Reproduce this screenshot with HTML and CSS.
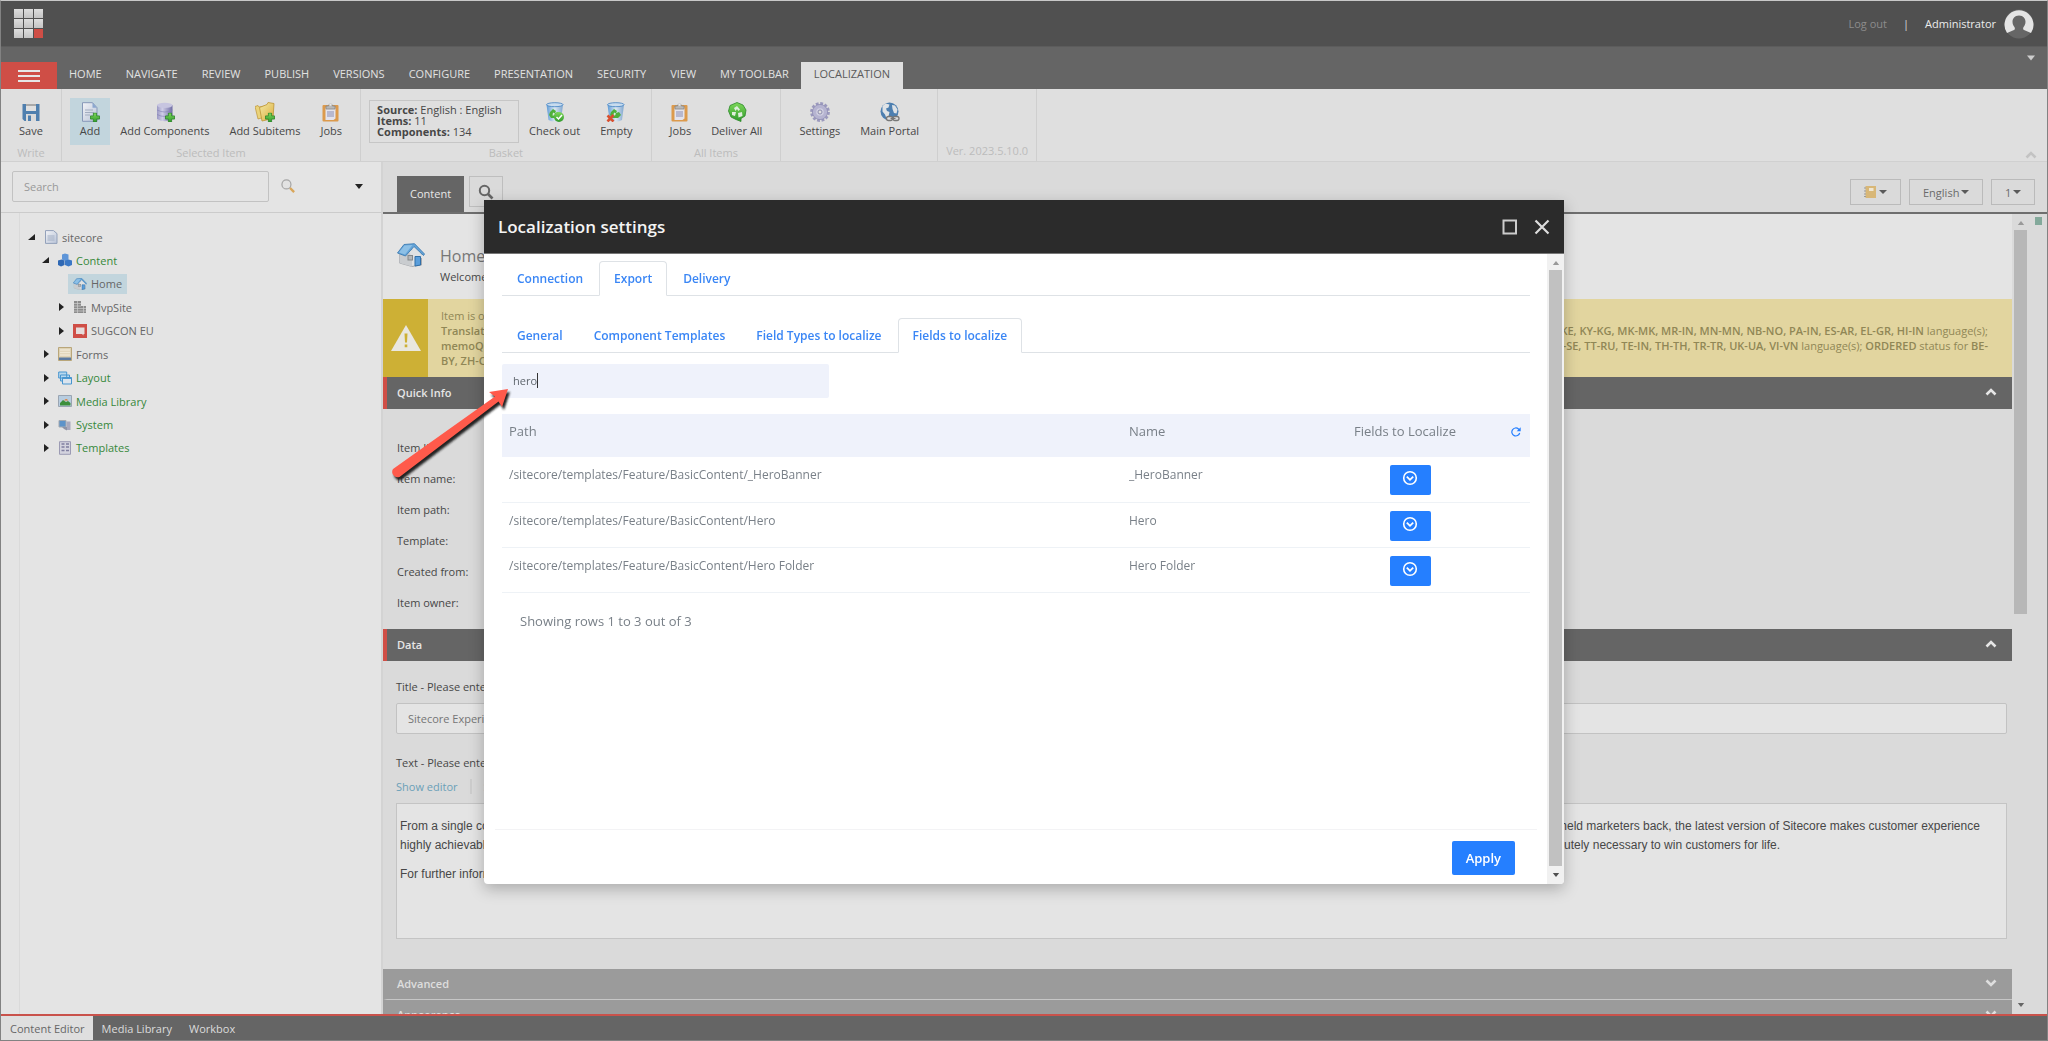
FILE: index.html
```html
<!DOCTYPE html>
<html lang="en">
<head>
  <meta charset="UTF-8">
  <meta name="viewport" content="width=device-width, initial-scale=1.0">
  <title>Content Editor</title>
  <link rel="stylesheet" href="styles.css">
</head>
<body>

<!-- Shared icons -->
<svg class="sprite" aria-hidden="true">
  <defs>
    <linearGradient id="g-green" x1="0" y1="0" x2="0" y2="1"><stop offset="0" stop-color="#7fd85a"/><stop offset="1" stop-color="#2f9a2c"/></linearGradient>
    <linearGradient id="g-bin" x1="0" y1="0" x2="1" y2="0"><stop offset="0" stop-color="#5d9bd6"/><stop offset=".5" stop-color="#dbe6f0"/><stop offset="1" stop-color="#7fa6cf"/></linearGradient>
    <linearGradient id="g-db" x1="0" y1="0" x2="1" y2="0"><stop offset="0" stop-color="#9b99c4"/><stop offset=".35" stop-color="#cfcde6"/><stop offset="1" stop-color="#6f6ca4"/></linearGradient>
    <linearGradient id="g-folder" x1="0" y1="0" x2="1" y2="1"><stop offset="0" stop-color="#f3e9a6"/><stop offset="1" stop-color="#dcae3c"/></linearGradient>
    <linearGradient id="g-page" x1="0" y1="0" x2="1" y2="1"><stop offset="0" stop-color="#f2f3f6"/><stop offset="1" stop-color="#b9c4d8"/></linearGradient>
  </defs>
  <symbol id="plus" viewBox="0 0 10 10"><path d="M3.4 .5h3.2v2.9h2.9v3.2H6.600v2.900H3.400V6.600H.5V3.400h2.900z" fill="url(#g-green)" stroke="#2b8428" stroke-width=".8"/></symbol>
  <symbol id="clipboard" viewBox="0 0 20 20">
    <rect x="1.500" y="3" width="16" height="16.500" rx="1" fill="#dc9a4c"/>
    <path d="M4.500 5.500h10v11l-2 1.500h-8z" fill="#e3e3ec"/><path d="M6 9h7v6H6z" fill="#b7b8cf"/>
    <path d="M5 7V4h2.500a2 2 0 0 1 4 0H14v3z" fill="#b9b9b9" stroke="#858585" stroke-width=".8"/>
    <circle cx="9.500" cy="2.600" r="1.200" fill="#e8e8e8"/>
  </symbol>
  <symbol id="bin" viewBox="0 0 20 20">
    <path d="M1.500 2.500l2 15.500q6.500 3 12.500 0l2-15.500z" fill="url(#g-bin)"/>
    <ellipse cx="9.800" cy="2.700" rx="8.300" ry="2" fill="#c9dcee" stroke="#4f8ac6" stroke-width=".9"/>
    <path d="M5 10l3-3 3 2-1 2 3-1 2 3-3 3H6l-2-3z" fill="#4eb03b"/>
    <path d="M8 10.500l2 1-1 2H7.500z" fill="#d7e8dc"/>
  </symbol>
  <symbol id="chev-up" viewBox="0 0 12 8"><path d="M1.500 6.500L6 2l4.500 4.500" fill="none" stroke="currentColor" stroke-width="2.600"/></symbol>
  <symbol id="chev-down" viewBox="0 0 12 8"><path d="M1.500 1.500L6 6l4.500-4.500" fill="none" stroke="currentColor" stroke-width="2.600"/></symbol>
  <symbol id="tri-up" viewBox="0 0 8 5"><path d="M0 5l4-5 4 5z" fill="currentColor"/></symbol>
  <symbol id="tri-down" viewBox="0 0 8 5"><path d="M0 0h8L4 5z" fill="currentColor"/></symbol>
  <symbol id="tri-right" viewBox="0 0 8 8"><path d="M2 0l5 4-5 4z" fill="#222"/></symbol>
  <symbol id="tri-open" viewBox="0 0 8 8"><path d="M7 1v6H0z" fill="#222"/></symbol>
  <symbol id="house" viewBox="0 0 28 24">
    <path d="M2.500 12L9 4l15.500 7.500V22l-9.500 1.500L2.500 20z" fill="#dfe1e3" stroke="#979b9f" stroke-width=".8"/>
    <path d="M2.500 12l6-7 6.500 8v10.500L2.500 20z" fill="#c9cccf"/>
    <path d="M17 3l8 9v3h-13z" fill="#dfe1e3"/>
    <path d="M.5 10L7 1.500 17.500.7 27.500 11l-1 1.500L17 3.500 8.500 13z" fill="#64a4d8" stroke="#3d7cb2" stroke-width=".9"/>
    <path d="M2 9.500L7.500 2.500 15.500 2 8 11.500z" fill="#8dc0e6"/>
    <rect x="11" y="12.500" width="4.500" height="4.500" fill="#b4b7ba" stroke="#85898c"/>
    <path d="M18 13.500h5.500V22l-5.500 1z" fill="#5a9edb" stroke="#2f6fa9"/>
  </symbol>
  <symbol id="round-down" viewBox="0 0 16 16"><circle cx="8" cy="8" r="6.300" fill="none" stroke="#fff" stroke-width="1.600"/><path d="M4.800 6.600L8 9.800l3.200-3.200" fill="none" stroke="#fff" stroke-width="1.800"/></symbol>
</svg>

<div class="app">
  <header class="topbar">
    <div class="logo"><i></i><i></i><i></i><i></i><i></i><i></i><i></i><i></i><i></i></div>
    <div class="account">
      <a href="#" class="logout">Log out</a>
      <span>|</span>
      <a href="#" class="user">Administrator</a>
      <svg class="avatar" viewBox="0 0 30 30"><circle cx="15" cy="15" r="14.500" fill="#666"/><path d="M3 24a14.500 14.500 0 1 1 24 0l-7-3c-1-.5-1.200-2-.4-3 3.400-4 2.400-11.500-4.600-11.500S7 14 10.400 18c.8 1 .6 2.500-.4 3z" fill="#e4e4e4"/></svg>
    </div>
  </header>

  <nav class="ribbon-tabs">
    <button class="menu-btn" aria-label="Menu"><i></i><i></i><i></i></button>
    <a href="#">HOME</a>
    <a href="#">NAVIGATE</a>
    <a href="#">REVIEW</a>
    <a href="#">PUBLISH</a>
    <a href="#">VERSIONS</a>
    <a href="#">CONFIGURE</a>
    <a href="#">PRESENTATION</a>
    <a href="#">SECURITY</a>
    <a href="#">VIEW</a>
    <a href="#">MY TOOLBAR</a>
    <a href="#" class="active">LOCALIZATION</a>
    <svg class="tabs-more"><use href="#tri-down"/></svg>
  </nav>

  <div class="ribbon">
    <section class="group">
      <div class="tools">
        <button class="tool"><svg viewBox="0 0 20 20"><path d="M1.500 2h17v17h-15l-2-2z" fill="#4f7fae"/><path d="M5 2h10v7H5z" fill="#e0e0e0"/><path d="M5 2h10v2H5z" fill="#a9a9a9"/><path d="M5 12h10v7H5z" fill="#dadada"/><path d="M7 13.500h3V19H7z" fill="#4f7fae"/></svg>Save</button>
      </div>
      <p class="group-name">Write</p>
    </section>
    <section class="group">
      <div class="tools">
        <button class="tool selected"><svg viewBox="0 0 20 20"><path d="M2.500.7h10l4.500 5v13.600H2.500z" fill="url(#g-page)" stroke="#8798b8"/><path d="M12.500.7v5H17z" fill="#8ba7cf"/><path d="M5 8h8M5 10.500h9M5 13h5" stroke="#a2adc0"/><use href="#plus" x="10" y="10.500" width="10" height="10"/></svg>Add</button>
        <button class="tool"><svg viewBox="0 0 20 20"><path d="M2 3v14q8 4.500 15.500 0V3z" fill="url(#g-db)"/><ellipse cx="9.800" cy="3.300" rx="7.800" ry="2.600" fill="#c7c5e0"/><path d="M2 8q8 4 15.500 0M2 12.500q8 4 15.500 0" fill="none" stroke="#8280b2" stroke-width=".6"/><use href="#plus" x="10" y="10.500" width="10" height="10"/></svg>Add Components</button>
        <button class="tool"><svg viewBox="0 0 20 20"><path d="M0 4.500l3-1 1 1.500 6-1v11L3 17z" fill="#ead37a" stroke="#bd9433" stroke-width=".7"/><path d="M4.500 5.500L12 2.500l1-2 6 1-1 15-11 2.500z" fill="url(#g-folder)" stroke="#bd9433" stroke-width=".8"/><use href="#plus" x="10" y="10.500" width="10" height="10"/></svg>Add Subitems</button>
        <button class="tool"><svg><use href="#clipboard"/></svg>Jobs</button>
      </div>
      <p class="group-name">Selected Item</p>
    </section>
    <section class="group">
      <div class="tools">
        <div class="basket">
          <p><b>Source:</b> English : English</p>
          <p><b>Items:</b> 11</p>
          <p><b>Components:</b> 134</p>
        </div>
        <button class="tool"><svg viewBox="0 0 20 20"><use href="#bin"/><circle cx="14" cy="15" r="5" fill="url(#g-green)"/><path d="M11.500 15l2 2 3.500-4" fill="none" stroke="#fff" stroke-width="1.500"/></svg>Check out</button>
        <button class="tool"><svg viewBox="0 0 20 20"><use href="#bin"/><path d="M1.500 13.500l6 6M7.500 13l-6 6.500" stroke="#d9502f" stroke-width="2.600"/></svg>Empty</button>
      </div>
      <p class="group-name">Basket</p>
    </section>
    <section class="group">
      <div class="tools">
        <button class="tool"><svg><use href="#clipboard"/></svg>Jobs</button>
        <button class="tool"><svg viewBox="0 0 20 20"><path d="M3 3.500L10 .5l6 2.500 3 5-1 6-4 2.500v3l-5-2-5-2.500-2.500-6z" fill="url(#g-green)" stroke="#2c8a2a" stroke-width=".8"/><path d="M7 6l3-2 3 3.500-1.500 1.500L10 7 8.500 9zM5 10h4l-1 4-3-1zM11 11l4-1 .5 4-4 1.500z" fill="#dfeedd"/></svg>Deliver All</button>
      </div>
      <p class="group-name">All Items</p>
    </section>
    <section class="group">
      <div class="tools">
        <button class="tool"><svg viewBox="0 0 20 20"><circle cx="10" cy="10" r="8.200" fill="none" stroke="#9b99bd" stroke-width="3.400" stroke-dasharray="2.700 1.590"/><circle cx="10" cy="10" r="7.600" fill="#b6b4d1" stroke="#8f8db4" stroke-width=".8"/><circle cx="10" cy="10" r="3.800" fill="#cfcee0"/><circle cx="10" cy="10" r="2" fill="#e0e0e0" stroke="#7d7ba3" stroke-width=".8"/></svg>Settings</button>
        <button class="tool"><svg viewBox="0 0 20 20"><circle cx="9.500" cy="9.500" r="9" fill="#4d7fb0"/><path d="M2.500 4l3-2.500 4 1-1 3-2.500 1 1 2.500 2.500 1-1 4.500-2 2-1.500-4-2.500-3zM12 3l3 .5 2.500 4-1 4-2.500-.5-1.500-4z" fill="#dfe3e6"/><rect x="6.500" y="14.500" width="6" height="4" rx="2" fill="#ddd" stroke="#777" stroke-width="1.300"/><rect x="13" y="14.500" width="6" height="4" rx="2" fill="#ddd" stroke="#777" stroke-width="1.300"/><path d="M10.500 16.500h5" stroke="#777"/></svg>Main Portal</button>
      </div>
    </section>
    <section class="group">
      <p class="group-name">Ver. 2023.5.10.0</p>
    </section>
    <svg class="ribbon-fold"><use href="#chev-up"/></svg>
  </div>

  <div class="workspace">
    <aside class="sidebar">
      <form class="tree-search">
        <input type="text" placeholder="Search" aria-label="Search">
        <svg class="lens" viewBox="0 0 16 16"><path d="M9.500 9.500l4.500 4.500" stroke="#d9a65a" stroke-width="2.400"/><circle cx="5.800" cy="5.800" r="4.800" fill="#e2e2e2" stroke="#a5a5a5" stroke-width="1.300"/></svg>
        <svg class="search-more"><use href="#tri-down"/></svg>
      </form>
      <div class="tree-wrap">
        <ul class="tree">
          <li><svg class="caret"><use href="#tri-open"/></svg><a href="#"><svg viewBox="0 0 14 14"><path d="M1.500.6h8l3.500 3v9.800H1.500z" fill="url(#g-page)" stroke="#93a1ba"/><path d="M3.500 6h7M3.500 8h7M3.500 10h7" stroke="#a3afc4"/></svg>sitecore</a></li>
          <li class="l1 system"><svg class="caret"><use href="#tri-open"/></svg><a href="#"><svg viewBox="0 0 14 14"><path d="M4 1.500l3-1 3.500 1v5l-3 1.500L4 6.500z" fill="#5e95d8"/><path d="M0 7.500l3.500-1 3 1v4.500L3 13.500 0 12z" fill="#2f68b4"/><path d="M7 7.500l3.500-1 3.500 1v4.500l-3.500 1.500L7 12z" fill="#3b78c6"/></svg>Content</a></li>
          <li class="l2"><span class="caret"></span><a href="#" class="current"><svg viewBox="0 0 28 24"><use href="#house"/></svg>Home</a></li>
          <li class="l2"><svg class="caret"><use href="#tri-right"/></svg><a href="#"><svg viewBox="0 0 14 14"><path d="M1 1h7v12H1zM8 6h5v7H8z" fill="#8c8c8c"/><path d="M1 3.500h7M1 6h7M1 8.500h12M1 11h12M4.500 1v12M10.500 6v7" stroke="#cfcfcf" stroke-width=".7"/></svg>MvpSite</a></li>
          <li class="l2"><svg class="caret"><use href="#tri-right"/></svg><a href="#"><svg viewBox="0 0 14 14"><path d="M0 0h14v14H0z" fill="#cf4e46"/><path d="M3 3.500h8.500v6.500h-1v1.500L9 10H3z" fill="#e6dcdb"/></svg>SUGCON EU</a></li>
          <li class="l1"><svg class="caret"><use href="#tri-right"/></svg><a href="#"><svg viewBox="0 0 14 14"><path d="M.5.5h13v13H.5z" fill="#ded2b4" stroke="#b9a67a"/><path d="M2 3h10M2 5.500h10M2 8h10" stroke="#efe8d5" stroke-width="1.500"/><path d="M1 10.500h12V13H1z" fill="#5d7ba2"/></svg>Forms</a></li>
          <li class="l1 system"><svg class="caret"><use href="#tri-right"/></svg><a href="#"><svg viewBox="0 0 14 14"><path d="M.7 1h8v6h-8zM2.500 4h9v6h-9z" fill="#b8d8ee" stroke="#4795cf"/><path d="M4.500 6.500h9V13h-9z" fill="#dae4ee" stroke="#4795cf"/><path d="M4.500 7.200h9" stroke="#4795cf" stroke-width="1.500"/></svg>Layout</a></li>
          <li class="l1 system"><svg class="caret"><use href="#tri-right"/></svg><a href="#"><svg viewBox="0 0 14 14"><path d="M.5 1.500h13v11H.5z" fill="#b8cde0" stroke="#9aa5b2"/><path d="M2 9l3-3 3 2 2-1 2.500 2v2.500H2z" fill="#3d8f3b"/><path d="M6 6.500q2-3 4.500 0z" fill="#e07b2d"/></svg>Media Library</a></li>
          <li class="l1 system"><svg class="caret"><use href="#tri-right"/></svg><a href="#"><svg viewBox="0 0 14 14"><path d="M1 2.500h7V9H1z" fill="#5d93c9" stroke="#a4a9b0"/><path d="M8.500 3.500h4V12h-4z" fill="#a9a9bd"/><path d="M4 9h5v3.500L6 11z" fill="#8f93a5"/></svg>System</a></li>
          <li class="l1 system"><svg class="caret"><use href="#tri-right"/></svg><a href="#"><svg viewBox="0 0 14 14"><path d="M1.500.7h11v12.600h-11z" fill="#d3d3de" stroke="#9c9bb4"/><path d="M3.500 3h3M3.500 6h3M3.500 9.500h3M8 3h3M8 6h3M8 9.500h3" stroke="#7f7e9f" stroke-width="1.400"/></svg>Templates</a></li>
        </ul>
      </div>
    </aside>

    <main class="editor">
      <div class="editor-tabs">
        <a href="#" class="content-tab">Content</a>
        <button class="find-tab" aria-label="Search"><svg viewBox="0 0 16 16"><circle cx="6.500" cy="6.500" r="4.700" fill="none" stroke="#666" stroke-width="2"/><path d="M10 10l4.500 4.500" stroke="#666" stroke-width="2.600"/></svg></button>
        <div class="switches">
          <button class="pick" aria-label="Navigate"><svg viewBox="0 0 12 12"><path d="M1.500 0H12v12H1.500z" fill="#d8b777"/><path d="M5 2h4.500v3H5z" fill="#efe6d2"/><path d="M0 2h2M0 5h2M0 8h2M0 10.500h2" stroke="#999"/></svg></button>
          <div class="pick"><select aria-label="Language"><option>English</option></select></div>
          <div class="pick"><select aria-label="Version"><option>1</option></select></div>
        </div>
      </div>

      <div class="editor-body">
        <div class="item">
          <div class="item-head">
            <svg class="item-icon"><use href="#house"/></svg>
            <div>
              <h1>Home</h1>
              <p>Welcome to Sitecore</p>
            </div>
          </div>

          <div class="alert">
            <div class="alert-icon"><svg viewBox="0 0 30 26"><path d="M15 0l15 26H0z" fill="#e9e7df"/><path d="M13.500 8.500h3l-.5 9h-2zM13.700 19.500h2.600v2.800h-2.600z" fill="#cdb035"/></svg></div>
            <div class="alert-text">
              <p><span>Item is ordered</span></p>
              <p><b>Translation</b><span><b>SW-KE, KY-KG, MK-MK, MR-IN, MN-MN, NB-NO, PA-IN, ES-AR, EL-GR, HI-IN</b> language(s);</span></p>
              <p><b>memoQ</b><span><b>SV-SE, TT-RU, TE-IN, TH-TH, TR-TR, UK-UA, VI-VN</b> language(s); <b>ORDERED</b> status for <b>BE-</b></span></p>
              <p><b>BY, ZH-CN</b></p>
            </div>
          </div>

          <h2 class="bar">Quick Info<svg><use href="#chev-up"/></svg></h2>
          <dl class="quick-info">
            <dt>Item ID:</dt>
            <dt>Item name:</dt>
            <dt>Item path:</dt>
            <dt>Template:</dt>
            <dt>Created from:</dt>
            <dt>Item owner:</dt>
          </dl>

          <h2 class="bar">Data<svg><use href="#chev-up"/></svg></h2>
          <div class="fields">
            <label for="title">Title - Please enter a title for the page</label>
            <input type="text" id="title" value="Sitecore Experience Platform">
            <p class="label">Text - Please enter text for the page</p>
            <div class="rich-links"><a href="#">Show editor</a><a href="#">Suggest fix</a></div>
            <div class="rich-text">
              <p>From a single connected platform that integrates with other customer-facing platforms, to a single view of the customer in a data marketing repository, to completely eliminating much of the complexity that has previously held marketers back, the latest version of Sitecore makes customer experience highly achievable. Learn how the latest version of Sitecore gives marketers the complete data, integrated tools, automation capabilities to engage customers throughout iterative lifecycle – the technology foundation absolutely necessary to win customers for life.</p>
              <p>For further information, please go to the Sitecore Documentation site</p>
            </div>
          </div>

          <h2 class="bar closed">Advanced<svg><use href="#chev-down"/></svg></h2>
          <h2 class="bar closed">Appearance<svg><use href="#chev-down"/></svg></h2>
        </div>
        <div class="scroller item-scroller">
          <svg><use href="#tri-up"/></svg>
          <div class="thumb"></div>
          <svg class="end"><use href="#tri-down"/></svg>
        </div>
        <div class="validators"><i></i></div>
      </div>
    </main>
  </div>

  <footer class="taskbar">
    <a href="#" class="active">Content Editor</a>
    <a href="#">Media Library</a>
    <a href="#">Workbox</a>
  </footer>
</div>

<div class="overlay">
  <div class="dialog" role="dialog" aria-labelledby="dialog-title">
    <div class="dialog-head">
      <h2 id="dialog-title">Localization settings</h2>
      <button aria-label="Maximize"><svg viewBox="0 0 16 16"><rect x="1.500" y="1.500" width="12.500" height="13" fill="none" stroke="#ccc" stroke-width="2"/></svg></button>
      <button aria-label="Close"><svg viewBox="0 0 16 16"><path d="M1.500 1.500l13 13M14.500 1.500l-13 13" stroke="#ddd" stroke-width="2.200"/></svg></button>
    </div>
    <div class="dialog-main">
      <div class="dialog-body">
        <nav class="tabs">
          <a href="#">Connection</a>
          <a href="#" class="active">Export</a>
          <a href="#">Delivery</a>
        </nav>
        <nav class="tabs sub">
          <a href="#">General</a>
          <a href="#">Component Templates</a>
          <a href="#">Field Types to localize</a>
          <a href="#" class="active">Fields to localize</a>
        </nav>
        <div class="filter"><input type="text" value="hero" aria-label="Filter"></div>
        <table class="fields-table">
          <thead>
            <tr>
              <th class="path">Path</th>
              <th class="name">Name</th>
              <th class="pick-col">Fields to Localize</th>
              <th class="refresh"><button aria-label="Refresh"><svg viewBox="0 0 10 10"><path d="M8.700 6A4 4 0 1 1 7.500 2L8.500 3" fill="none" stroke="#257fff" stroke-width="1.200"/><path d="M9.700.3v4H5.700z" fill="#257fff"/></svg></button></th>
            </tr>
          </thead>
          <tbody>
            <tr>
              <td>/sitecore/templates/Feature/BasicContent/_HeroBanner</td>
              <td>_HeroBanner</td>
              <td class="act"><button aria-label="Select fields"><svg><use href="#round-down"/></svg></button></td>
              <td></td>
            </tr>
            <tr>
              <td>/sitecore/templates/Feature/BasicContent/Hero</td>
              <td>Hero</td>
              <td class="act"><button aria-label="Select fields"><svg><use href="#round-down"/></svg></button></td>
              <td></td>
            </tr>
            <tr>
              <td>/sitecore/templates/Feature/BasicContent/Hero Folder</td>
              <td>Hero Folder</td>
              <td class="act"><button aria-label="Select fields"><svg><use href="#round-down"/></svg></button></td>
              <td></td>
            </tr>
          </tbody>
        </table>
        <p class="summary">Showing rows 1 to 3 out of 3</p>
        <div class="dialog-foot"><button class="apply">Apply</button></div>
      </div>
      <div class="scroller dialog-scroller">
        <svg><use href="#tri-up"/></svg>
        <div class="thumb"></div>
        <svg class="end"><use href="#tri-down"/></svg>
      </div>
    </div>
  </div>
</div>

<!-- Callout arrow -->
<svg class="callout" viewBox="0 0 130 110">
  <defs><filter id="soft" x="-10%" y="-10%" width="120%" height="120%"><feGaussianBlur stdDeviation="1.200"/></filter></defs>
  <path d="M3 87L105 14.500l-6-4.500 19-3-6 18-3.500-5.500L9.500 95a5.500 5.500 0 0 1-6.500-8z" transform="translate(2 3)" fill="#222" filter="url(#soft)"/>
  <path d="M3 87L105 14.500l-6-4.500 19-3-6 18-3.500-5.500L9.500 95a5.500 5.500 0 0 1-6.500-8z" fill="#ff5a4b"/>
</svg>

</body>
</html>
```
FILE: styles.css
```css
/* Basic reset */
*, *::before, *::after {
  box-sizing: border-box;
}

body, h1, h2, p, ul, dl, dt {
  margin: 0;
  padding: 0;
}

body {
  height: 100vh;
  overflow: hidden;
  font-family: "Open Sans", sans-serif;
  font-size: 11px;
  line-height: 15px;
  color: #474747;
  background: #dadada;
}

a {
  color: inherit;
  text-decoration: none;
}

button, input, select {
  font: inherit;
  color: inherit;
  margin: 0;
  padding: 0;
  border: 0;
  background: none;
}

svg {
  display: block;
  flex: none;
}

b {
  font-weight: 600;
}

.sprite {
  position: absolute;
  width: 0;
  height: 0;
}

.app {
  height: 100vh;
  display: flex;
  flex-direction: column;
  border: 1px solid #828282;
  border-top-color: #c8c8c8;
}

/* Top bar */
.topbar {
  height: 45px;
  flex: none;
  display: flex;
  justify-content: space-between;
  align-items: center;
  padding: 0 13px;
  background: #505050;
}

.logo {
  display: grid;
  grid-template-columns: repeat(3, 9px);
  grid-auto-rows: 9px;
  gap: 1px;
}

.logo i {
  background: linear-gradient(#dedede, #c4c4c4);
}

.logo i:last-child {
  background: #cf4e46;
}

.account {
  display: flex;
  align-items: center;
  color: #dadada;
}

.logout {
  color: #8c8c8c;
  margin-right: 16px;
}

.user {
  color: #ececec;
  margin: 0 8px 0 16px;
}

.avatar {
  width: 30px;
  height: 30px;
}

/* Ribbon */
.ribbon-tabs {
  height: 43px;
  flex: none;
  display: flex;
  align-items: flex-end;
  background: #656565;
  border-top: 1px solid #5c5c5c;
  color: #e2e2e2;
}

.ribbon-tabs a {
  height: 27px;
  line-height: 24px;
  padding: 0 12px;
}

.ribbon-tabs .active {
  padding: 0 13px;
  background: #dfdfdf;
  color: #5a5a5a;
}

.menu-btn {
  width: 56px;
  height: 27px;
  background: #cf4e46;
  display: flex;
  flex-direction: column;
  justify-content: center;
  align-items: center;
  gap: 3px;
}

.menu-btn i {
  width: 22px;
  height: 2px;
  background: #e6e6e6;
}

.tabs-more {
  width: 8px;
  height: 6px;
  color: #cdcdcd;
  margin: 0 12px 28px auto;
}

.ribbon {
  height: 73px;
  flex: none;
  display: flex;
  background: #dfdfdf;
  border-bottom: 1px solid #d0d0d0;
}

.group {
  display: flex;
  flex-direction: column;
  padding: 9px 8px 0;
  border-right: 1px solid #cfcfcf;
}

.tools {
  display: flex;
}

.tool {
  height: 47px;
  padding: 4px 10px 0;
  display: flex;
  flex-direction: column;
  align-items: center;
  gap: 1px;
}

.tool svg {
  width: 20px;
  height: 20px;
}

.tool.selected {
  background: #c2d5dd;
}

.group-name {
  margin-top: auto;
  padding-bottom: 3px;
  color: #bcbcbc;
  text-align: center;
}

.basket {
  width: 150px;
  height: 43px;
  margin-top: 2px;
  padding: 3px 7px;
  border: 1px solid #c6c6c6;
  line-height: 11px;
}

.basket b {
  font-weight: 700;
}

.ribbon-fold {
  width: 12px;
  height: 8px;
  margin: auto 10px 2px auto;
  color: #c3c3c3;
}

/* Workspace */
.workspace {
  flex: 1;
  min-height: 0;
  display: flex;
}

.sidebar {
  width: 382px;
  flex: none;
  display: flex;
  flex-direction: column;
  background: #e4e4e4;
  border-right: 2px solid #d3d3d3;
}

.tree-search {
  height: 51px;
  flex: none;
  display: flex;
  align-items: center;
  padding: 0 18px 2px 11px;
  border-bottom: 1px solid #cbcbcb;
}

.tree-search input {
  width: 257px;
  height: 31px;
  padding: 0 11px;
  border: 1px solid #c2c2c2;
  border-radius: 2px;
}

.tree-search input::placeholder {
  color: #999;
}

.lens {
  width: 15px;
  height: 15px;
  margin-left: 12px;
}

.search-more {
  width: 8px;
  height: 5px;
  margin-left: auto;
  color: #222;
}

.tree-wrap {
  flex: 1;
  margin-left: 18px;
  padding: 14px 0 0 8px;
  border-left: 1px solid #dadada;
}

.tree {
  height: 231px;
  display: flex;
  flex-direction: column;
  justify-content: space-between;
  list-style: none;
  color: #666;
}

.tree li {
  display: flex;
  align-items: center;
}

.tree .l1 {
  padding-left: 14px;
}

.tree .l2 {
  padding-left: 29px;
}

.tree .system {
  color: #36883a;
}

.caret {
  width: 8px;
  height: 8px;
  margin-right: 3px;
}

.tree a {
  height: 20px;
  display: flex;
  align-items: center;
  gap: 4px;
  padding: 0 5px;
}

.tree a svg {
  width: 14px;
  height: 14px;
}

.tree .current {
  background: #c2d5dd;
}

/* Editor */
.editor {
  flex: 1;
  min-width: 0;
  display: flex;
  flex-direction: column;
}

.editor-tabs {
  height: 52px;
  flex: none;
  display: flex;
  align-items: flex-end;
  padding-left: 14px;
  border-bottom: 2px solid #6e6e6e;
}

.content-tab {
  height: 36px;
  line-height: 36px;
  padding: 0 13px;
  background: #656565;
  color: #e8e8e8;
}

.find-tab {
  width: 34px;
  height: 31px;
  margin: 0 0 5px 5px;
  padding-left: 8px;
  border: 1px solid #bebebe;
}

.find-tab svg {
  width: 16px;
  height: 16px;
}

.switches {
  display: flex;
  gap: 8px;
  margin: 0 12px 7px auto;
}

.pick {
  height: 26px;
  padding: 0 13px;
  display: flex;
  align-items: center;
  gap: 1px;
  border: 1px solid #bababa;
  color: #6a6a6a;
}

button.pick {
  gap: 3px;
}

.pick select {
  appearance: none;
}

.pick svg {
  width: 12px;
  height: 12px;
}

.pick::after {
  content: "";
  border: 4px solid transparent;
  border-top-color: #5a5a5a;
  border-bottom: 0;
}

.editor-body {
  flex: 1;
  min-height: 0;
  display: flex;
}

.item {
  flex: 1;
  overflow: hidden;
}

.item-head {
  height: 85px;
  display: flex;
  gap: 15px;
  padding: 29px 14px 0;
  background: #e4e4e4;
}

.item-icon {
  width: 28px;
  height: 24px;
}

.item-head h1 {
  padding-top: 3px;
  font-size: 16px;
  line-height: 20px;
  font-weight: 400;
  color: #777;
}

.item-head p {
  padding-top: 3px;
}

.alert {
  display: flex;
  background: #e2d59f;
}

.alert-icon {
  width: 45px;
  display: flex;
  align-items: center;
  justify-content: center;
  background: #cdb035;
}

.alert-icon svg {
  width: 30px;
  height: 26px;
}

.alert-text {
  flex: 1;
  padding: 9px 24px 9px 13px;
  color: #908756;
}

.alert-text p {
  display: flex;
  justify-content: space-between;
}

.bar {
  height: 32px;
  display: flex;
  align-items: center;
  justify-content: space-between;
  padding: 0 15px 2px 10px;
  border-left: 4px solid #cf4e46;
  background: #656565;
  color: #e6e6e6;
  font-size: 11px;
  font-weight: 600;
}

.bar svg {
  width: 12px;
  height: 8px;
}

.bar.closed {
  height: 31px;
  border-left-color: #9b9b9b;
  border-bottom: 1px solid #c6c6c6;
  background: #9b9b9b;
  color: #dedede;
}

.quick-info {
  padding: 23px 14px 11px;
  line-height: 31px;
}

.fields {
  padding: 18px 5px 30px 13px;
}

.fields input {
  display: block;
  width: 100%;
  height: 31px;
  margin: 9px 0 21px;
  padding: 0 11px;
  border: 1px solid #c2c2c2;
  border-radius: 2px;
  background: #e4e4e4;
  color: #757575;
}

.rich-links {
  display: flex;
  margin: 9px 0;
  color: #6ba0b8;
}

.rich-links a + a {
  margin-left: 12px;
  padding-left: 12px;
  border-left: 2px solid #cdcdcd;
}

.rich-text {
  height: 136px;
  padding: 13px 3px;
  border: 1px solid #c4c4c4;
  background: #e4e4e4;
  font-family: "Liberation Sans", Arial, sans-serif;
  font-size: 12px;
  line-height: 19px;
}

.rich-text p {
  margin-bottom: 10px;
}

/* Scroll columns */
.scroller {
  width: 17px;
  display: flex;
  flex-direction: column;
  align-items: center;
  color: #999;
}

.scroller svg {
  width: 8px;
  height: 4px;
  margin: 7px 0 5px;
}

.scroller .thumb {
  width: 13px;
  background: #b7b7b7;
}

.scroller .end {
  margin: auto 0 7px;
  color: #666;
}

.item-scroller .thumb {
  height: 48%;
}

.validators {
  width: 18px;
  padding: 3px 0 0 6px;
}

.validators i {
  display: block;
  width: 7px;
  height: 8px;
  background: #83a99b;
}

/* Taskbar */
.taskbar {
  height: 26px;
  flex: none;
  display: flex;
  border-top: 2px solid #c9524b;
  background: #656565;
  color: #dcdcdc;
  line-height: 26px;
}

.taskbar a {
  padding: 0 8px 0 9px;
}

.taskbar .active {
  background: #dfdfdf;
  color: #666;
}

/* Dialog */
.overlay {
  position: fixed;
  inset: 0;
  display: flex;
  justify-content: center;
  align-items: flex-start;
  padding-top: 200px;
}

.dialog {
  width: 1080px;
  max-width: 100%;
  display: flex;
  flex-direction: column;
  border-radius: 0 0 4px 4px;
  overflow: hidden;
  background: #fff;
  box-shadow: 0 5px 15px rgba(0, 0, 0, 0.25);
}

.dialog-head {
  height: 54px;
  display: flex;
  align-items: center;
  gap: 16px;
  padding: 0 14px;
  background: #2b2b2b;
  border-bottom: 1px solid #777;
}

.dialog-head h2 {
  margin-right: auto;
  font-size: 17px;
  line-height: 23px;
  font-weight: 600;
  color: #f4f4f4;
}

.dialog-head svg {
  width: 16px;
  height: 16px;
}

.dialog-main {
  height: 630px;
  display: flex;
}

.dialog-body {
  flex: 1;
  display: flex;
  flex-direction: column;
  padding: 7px 17px 9px 18px;
  font-size: 12px;
  color: #798088;
}

.tabs {
  display: flex;
  gap: 1px;
  border-bottom: 1px solid #dee2e6;
  color: #3a86f5;
  font-weight: 600;
}

.tabs a {
  height: 35px;
  line-height: 33px;
  margin-bottom: -1px;
  padding: 0 14px;
  border: 1px solid transparent;
}

.tabs .active {
  border-color: #dee2e6 #dee2e6 #fff;
  border-radius: 4px 4px 0 0;
  background: #fff;
}

.tabs.sub {
  margin-top: 22px;
}

.filter {
  position: relative;
  margin: 11px 0 16px;
}

.filter input {
  width: 327px;
  height: 34px;
  padding: 0 11px 2px;
  border-radius: 2px;
  background: #eff2fb;
  font-size: 11px;
  color: #5f666d;
}

/* Text cursor in the filter box */
.filter::after {
  content: "";
  position: absolute;
  left: 35px;
  top: 9px;
  width: 1px;
  height: 15px;
  background: #333;
}

.fields-table {
  width: 100%;
  table-layout: fixed;
  border-collapse: collapse;
}

.fields-table th {
  height: 43px;
  padding: 8px 7px 0;
  vertical-align: top;
  text-align: left;
  font-size: 13px;
  line-height: 18px;
  font-weight: 400;
  background: #eff2fb;
}

.fields-table td {
  height: 45px;
  padding: 8px 7px 0;
  vertical-align: top;
  border-bottom: 1px solid #eef2f6;
  line-height: 19px;
}

.fields-table .name {
  width: 225px;
}

.fields-table .pick-col {
  width: 126px;
}

.fields-table .refresh {
  width: 57px;
  padding-right: 9px;
}

.refresh button {
  display: block;
  margin: 5px 0 0 auto;
}

.refresh svg {
  width: 10px;
  height: 10px;
}

.fields-table .act {
  text-align: center;
}

.act button {
  width: 41px;
  height: 30px;
  padding-bottom: 4px;
  border-radius: 2px;
  background: #257fff;
}

.act svg {
  width: 16px;
  height: 16px;
  margin: 0 auto;
}

.summary {
  margin: 19px 18px 0;
  font-size: 13px;
  line-height: 18px;
}

.dialog-foot {
  margin: auto -7px 0;
  padding: 11px 22px 0;
  border-top: 1px solid #f3f3f5;
  text-align: right;
}

.apply {
  height: 34px;
  padding: 0 14px;
  border-radius: 2px;
  background: #257fff;
  color: #fff;
  font-size: 13px;
  font-weight: 600;
}

.dialog-scroller {
  background: #f1f1f1;
}

.dialog-scroller .thumb {
  flex: 1;
  background: #c1c1c1;
}

.dialog-scroller .end {
  margin-top: 7px;
  color: #505050;
}

.callout {
  position: absolute;
  left: 390px;
  top: 382px;
  width: 130px;
  height: 110px;
}
```
